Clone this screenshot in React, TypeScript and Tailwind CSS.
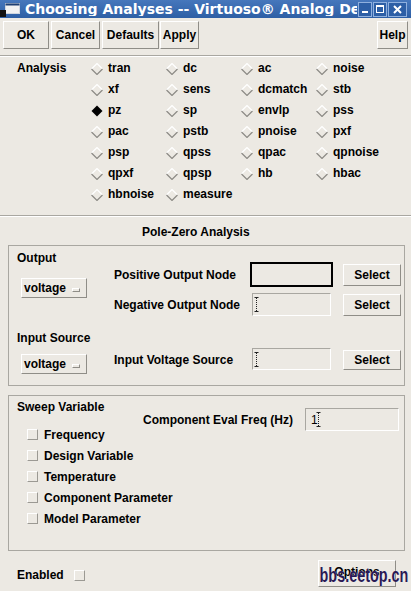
import React from 'react';

const Raised = ({ children, className = '' }: { children?: React.ReactNode; className?: string }) => (
  <div className={`flex items-center justify-center border border-t-white border-l-white border-r-[#8f8d87] border-b-[#8f8d87] ${className}`}>
    {children}
  </div>
);

const Diamond = ({ on = false }: { on?: boolean }) => (
  <svg width="12" height="12" viewBox="0 0 12 12" className="mr-[5px] mt-[3px] shrink-0">
    {on ? (
      <polygon points="6,0.5 11.5,6 6,11.5 0.5,6" fill="#000" />
    ) : (
      <>
        <polyline points="0.5,6 6,0.5 11.5,6" fill="none" stroke="#ffffff" strokeWidth="1.2" />
        <polyline points="0.5,6 6,11.5 11.5,6" fill="none" stroke="#8c8a85" strokeWidth="1.2" />
      </>
    )}
  </svg>
);

const Caret = () => (
  <svg width="5" height="15" viewBox="0 0 5 15" className="shrink-0">
    <line x1="0.5" y1="0.5" x2="4.5" y2="0.5" stroke="#222" />
    <line x1="2.5" y1="1" x2="2.5" y2="14" stroke="#222" strokeDasharray="1 1" />
    <line x1="0.5" y1="14.5" x2="4.5" y2="14.5" stroke="#222" />
  </svg>
);

const Field = ({ className = '', children }: { className?: string; children?: React.ReactNode }) => (
  <div className={`flex items-center border border-t-[#a9a7a1] border-l-[#a9a7a1] border-r-white border-b-white pl-[1px] ${className}`}>
    {children}
  </div>
);

const Dropdown = ({ className = '' }: { className?: string }) => (
  <Raised className={`w-[66px] h-[20px] !justify-start pl-[2px] ${className}`}>
    <span>voltage</span>
    <span className="ml-[6px] mt-[3px] w-[8px] h-[4px] border border-t-white border-l-white border-r-[#8f8d87] border-b-[#8f8d87]" />
  </Raised>
);

const Check = ({ className = '' }: { className?: string }) => (
  <span className={`inline-block w-[11px] h-[11px] border border-t-white border-l-white border-r-[#9b9993] border-b-[#9b9993] ${className}`} />
);

const analyses = [
  ['tran', 'dc', 'ac', 'noise'],
  ['xf', 'sens', 'dcmatch', 'stb'],
  ['pz', 'sp', 'envlp', 'pss'],
  ['pac', 'pstb', 'pnoise', 'pxf'],
  ['psp', 'qpss', 'qpac', 'qpnoise'],
  ['qpxf', 'qpsp', 'hb', 'hbac'],
  ['hbnoise', 'measure'],
];

const sweepVars = ['Design Variable', 'Temperature', 'Component Parameter', 'Model Parameter'];

export default function App() {
  return (
    <div className="relative w-[411px] h-[591px] overflow-hidden bg-[#ece9e3] font-['Liberation_Sans',Arial,sans-serif] text-[12px] font-bold leading-none text-black">
      {/* title bar */}
      <div className="flex h-[18px] items-center bg-linear-to-b from-[#4677bc] to-[#2d5fa5]">
        <svg width="20" height="18" viewBox="0 0 20 18" className="shrink-0">
          <rect x="5.5" y="3.5" width="14" height="10" fill="#f2f2f2" stroke="#cfd6e0" />
          <rect x="5.5" y="3.5" width="14" height="2" fill="#1f3f73" />
          <rect x="0" y="10" width="6" height="7" fill="#111" />
        </svg>
        <div className="ml-[5px] w-[332px] overflow-hidden whitespace-nowrap font-['DejaVu_Sans',sans-serif] text-[14px] font-bold text-white">
          Choosing Analyses -- Virtuoso® Analog Design
        </div>
        <div className="flex gap-[1px] ml-[1px]">
          <div className="w-[14px] h-[15px] border border-[#8fb0de] bg-[#2d5fa6] flex items-end justify-center pb-[3px]">
            <span className="w-[6px] h-[2px] bg-white" />
          </div>
          <div className="w-[14px] h-[15px] border border-[#8fb0de] bg-[#2d5fa6] flex items-center justify-center">
            <span className="w-[8px] h-[8px] border border-white border-t-2" />
          </div>
          <div className="w-[19px] h-[15px] border border-[#8fb0de] bg-[#2d5fa6] flex items-center justify-center">
            <svg width="9" height="9" viewBox="0 0 9 9">
              <path d="M1 1 L8 8 M8 1 L1 8" stroke="#fff" strokeWidth="2" />
            </svg>
          </div>
        </div>
      </div>

      {/* toolbar */}
      <div className="flex h-[37px] pt-[3px] pl-[3px] pr-[3px] items-start">
        <Raised className="w-[46px] h-[28px]">OK</Raised>
        <Raised className="ml-[2px] w-[49px] h-[28px]">Cancel</Raised>
        <Raised className="ml-[2px] w-[57px] h-[28px]">Defaults</Raised>
        <Raised className="ml-[1px] w-[39px] h-[28px]">Apply</Raised>
        <Raised className="ml-auto w-[31px] h-[28px]">Help</Raised>
      </div>
      <div className="h-[1px] bg-[#a9a7a1]" />
      <div className="h-[1px] bg-white" />

      {/* analysis choices */}
      <div className="flex">
        <div className="w-[91px] pl-[17px] h-[21px] flex items-center">Analysis</div>
        <div className="grid grid-cols-[75px_75px_75px_75px]">
          {analyses.flat().map((name) => (
            <div key={name} className="h-[21px] flex items-center">
              <Diamond on={name === 'pz'} />
              <span>{name}</span>
            </div>
          ))}
        </div>
      </div>

      <div className="mt-[11px] h-[1px] bg-[#a9a7a1]" />
      <div className="h-[1px] bg-white" />

      <div className="h-[28px] flex items-center pt-[2px] pl-[142px]">Pole-Zero Analysis</div>

      {/* output / input box */}
      <div className="ml-[8px] w-[397px] h-[141px] border border-[#a9a7a1]">
        <div className="flex">
          <div className="w-[105px] pl-[8px]">
            <div className="mt-[5px] h-[14px] flex items-center">Output</div>
            <Dropdown className="mt-[13px] ml-[4px]" />
          </div>
          <div>
            <div className="mt-[16px] h-[25px] flex items-center">
              <span className="w-[136px]">Positive Output Node</span>
              <div className="w-[83px] h-[25px] border-2 border-black" />
              <Raised className="ml-[10px] w-[58px] h-[22px]">Select</Raised>
            </div>
            <div className="mt-[6px] h-[23px] flex items-center">
              <span className="w-[138px]">Negative Output Node</span>
              <Field className="w-[79px] h-[23px]">
                <Caret />
              </Field>
              <Raised className="ml-[12px] w-[58px] h-[22px]">Select</Raised>
            </div>
          </div>
        </div>
        <div className="mt-[15px] h-[14px] pl-[8px] flex items-center">Input Source</div>
        <div className="mt-[3px] flex items-start">
          <Dropdown className="ml-[12px] mt-[6px]" />
          <span className="ml-[27px] w-[138px] h-[24px] flex items-center">Input Voltage Source</span>
          <Field className="w-[79px] h-[22px]">
            <Caret />
          </Field>
          <Raised className="ml-[12px] mt-[2px] w-[58px] h-[20px]">Select</Raised>
        </div>
      </div>

      {/* sweep box */}
      <div className="mt-[9px] ml-[8px] w-[397px] h-[156px] border border-[#a9a7a1]">
        <div className="flex">
          <div className="w-[134px]">
            <div className="mt-[4px] h-[14px] pl-[8px] flex items-center">Sweep Variable</div>
            <div className="mt-[10px] h-[21px] pl-[18px] flex items-center">
              <Check />
              <span className="ml-[6px]">Frequency</span>
            </div>
          </div>
          <div className="mt-[12px] h-[23px] flex items-center">
            <span className="w-[162px]">Component Eval Freq (Hz)</span>
            <Field className="w-[94px] h-[23px] pl-[5px]">
              <span className="font-normal">1</span>
              <span className="-ml-[2px]">
                <Caret />
              </span>
            </Field>
          </div>
        </div>
        {sweepVars.map((v) => (
          <div key={v} className="h-[21px] pl-[18px] flex items-center">
            <Check />
            <span className="ml-[6px]">{v}</span>
          </div>
        ))}
      </div>

      {/* footer */}
      <div className="flex items-start">
        <div className="mt-[17px] pl-[17px] flex items-center h-[14px]">
          <span>Enabled</span>
          <Check className="ml-[10px]" />
        </div>
        <Raised className="ml-auto mr-[15px] mt-[9px] w-[78px] h-[27px] !items-start pt-[5px]">Options</Raised>
      </div>

      <div className="absolute right-[3px] bottom-[6px] origin-right scale-x-[0.72] font-['Liberation_Sans',Arial,sans-serif] text-[20px] font-bold text-[#2a1a55] leading-none [text-shadow:0_0_1px_#fff]">
        bbs.eetop.cn
      </div>
    </div>
  );
}
